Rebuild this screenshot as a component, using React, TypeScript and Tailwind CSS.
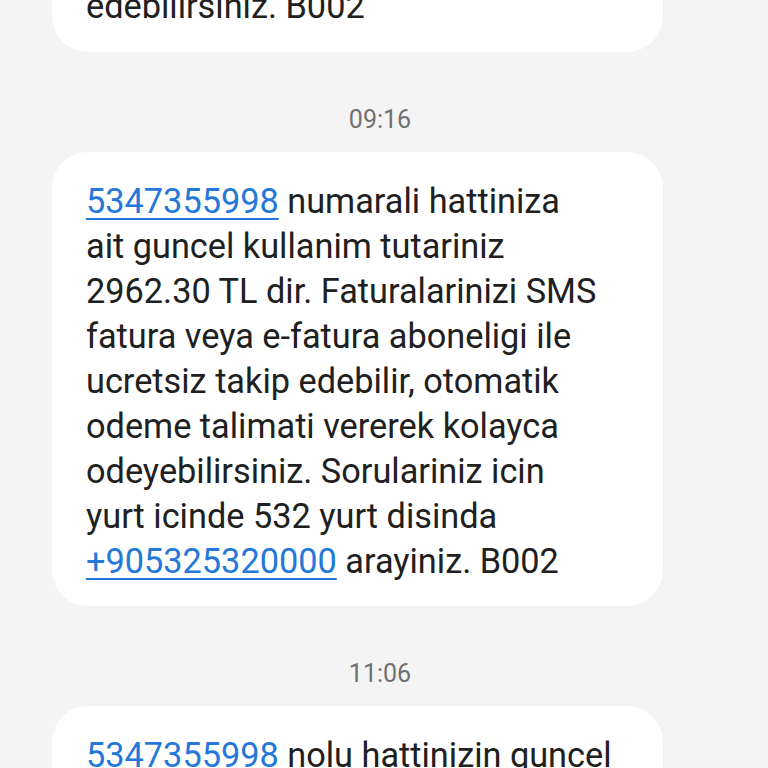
import React from "react";

const Link = ({ children }: { children: React.ReactNode }) => (
  <span className="text-[#2478da] underline decoration-[1.5px] underline-offset-[5px]">
    {children}
  </span>
);

const Time = ({ value }: { value: string }) => (
  <div className="pt-[51px] pb-[16px] pr-[8px] text-center text-[25px] leading-[33px] text-[#707070]">
    {value}
  </div>
);

const Bubble = ({ children, pb = "pb-[22px]" }: { children: React.ReactNode; pb?: string }) => (
  <div className={`ml-[52px] w-[611px] rounded-[36px] bg-white pl-[34px] pr-[36px] pt-[27px] ${pb}`}>
    <p className="whitespace-nowrap text-[34.3px] leading-[45px] text-[#202020]">{children}</p>
  </div>
);

export default function App() {
  return (
    <div className="h-[768px] w-[768px] overflow-hidden bg-[#f4f4f4] font-['Roboto',sans-serif]">
      <div className="-mt-[43px] flex flex-col">
        <Bubble pb="pb-[23px]">edebilirsiniz. B002</Bubble>

        <Time value="09:16" />

        <Bubble>
          <Link>5347355998</Link> numarali hattiniza
          <br />
          ait guncel kullanim tutariniz
          <br />
          2962.30 TL dir. Faturalarinizi SMS
          <br />
          fatura veya e-fatura aboneligi ile
          <br />
          ucretsiz takip edebilir, otomatik
          <br />
          odeme talimati vererek kolayca
          <br />
          odeyebilirsiniz. Sorulariniz icin
          <br />
          yurt icinde 532 yurt disinda
          <br />
          <Link>+905325320000</Link> arayiniz. B002
        </Bubble>

        <Time value="11:06" />

        <Bubble>
          <Link>5347355998</Link> nolu hattinizin guncel
        </Bubble>
      </div>
    </div>
  );
}
